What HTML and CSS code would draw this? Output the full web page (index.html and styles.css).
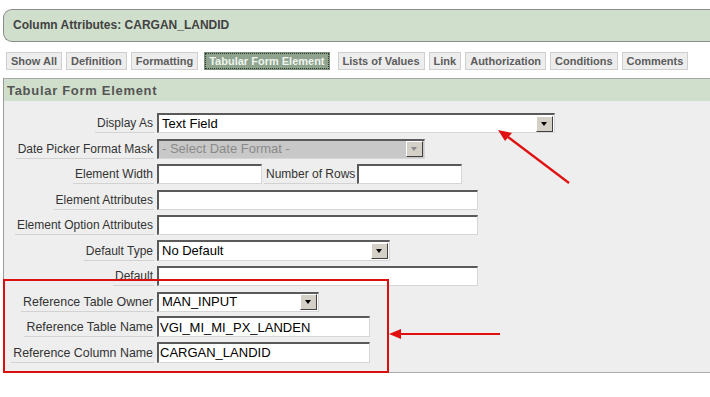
FILE: index.html
```html
<!DOCTYPE html>
<html lang="en">

<head>
    <meta charset="UTF-8">
    <meta name="viewport" content="width=device-width, initial-scale=1.0">
    <title>Column Attributes: CARGAN_LANDID</title>
    <link rel="stylesheet" href="styles.css">
</head>

<body>
    <div id="page">
        <div class="titlebar">Column Attributes: CARGAN_LANDID</div>

        <ul class="tabs">
            <li><a href="javascript:;">Show All</a></li>
            <li><a href="javascript:;">Definition</a></li>
            <li><a href="javascript:;">Formatting</a></li>
            <li class="current"><a href="javascript:;">Tabular Form Element</a></li>
            <li><a href="javascript:;">Lists of Values</a></li>
            <li><a href="javascript:;">Link</a></li>
            <li><a href="javascript:;">Authorization</a></li>
            <li><a href="javascript:;">Conditions</a></li>
            <li><a href="javascript:;">Comments</a></li>
        </ul>

        <div class="region">
            <div class="regionHead">Tabular Form Element</div>
            <div class="regionBody">
                <div class="row">
                    <div class="lbl"><span>Display As</span></div>
                    <div class="select wDisplay">
                        <span class="val">Text Field</span>
                        <span class="arrowBtn"></span>
                    </div>
                </div>
                <div class="row">
                    <div class="lbl"><span>Date Picker Format Mask</span></div>
                    <div class="select wDate disabled">
                        <span class="val">- Select Date Format -</span>
                        <span class="arrowBtn"></span>
                    </div>
                </div>
                <div class="row">
                    <div class="lbl"><span>Element Width</span></div>
                    <input type="text" class="text wSmall">
                    <span class="inlineLbl">Number of Rows</span>
                    <input type="text" class="text wSmall">
                </div>
                <div class="row">
                    <div class="lbl"><span>Element Attributes</span></div>
                    <input type="text" class="text wWide">
                </div>
                <div class="row">
                    <div class="lbl"><span>Element Option Attributes</span></div>
                    <input type="text" class="text wWide">
                </div>
                <div class="row">
                    <div class="lbl"><span>Default Type</span></div>
                    <div class="select wType">
                        <span class="val">No Default</span>
                        <span class="arrowBtn"></span>
                    </div>
                </div>
                <div class="row">
                    <div class="lbl"><span>Default</span></div>
                    <input type="text" class="text wWide">
                </div>
                <div class="row ref">
                    <div class="lbl"><span>Reference Table Owner</span></div>
                    <div class="select wOwner">
                        <span class="val">MAN_INPUT</span>
                        <span class="arrowBtn"></span>
                    </div>
                </div>
                <div class="row ref">
                    <div class="lbl"><span>Reference Table Name</span></div>
                    <input type="text" class="text wRef" value="VGI_MI_MI_PX_LANDEN">
                </div>
                <div class="row ref">
                    <div class="lbl"><span>Reference Column Name</span></div>
                    <input type="text" class="text wRef" value="CARGAN_LANDID">
                </div>
            </div>
        </div>

        <!-- annotations drawn over the screenshot -->
        <div class="markBox"></div>
        <svg class="marks" width="710" height="397" viewBox="0 0 710 397">
            <line x1="569" y1="183" x2="508" y2="137" stroke="#e01010" stroke-width="2.2"/>
            <polygon points="498,130 512,133 505,141" fill="#e01010"/>
            <line x1="500" y1="334" x2="400" y2="334" stroke="#e01010" stroke-width="2.2"/>
            <polygon points="389,334 401,329 401,339" fill="#e01010"/>
        </svg>
    </div>
</body>

</html>
```

FILE: styles.css
```css
body {
    margin: 0;
    background: #ffffff;
    font-family: "Liberation Sans", Arial, sans-serif;
    color: #333333;
}

ul {
    margin: 0;
    padding: 0;
    list-style: none;
}

a {
    text-decoration: none;
}

#page {
    position: relative;
    width: 710px;
    height: 397px;
    overflow: hidden;
}

.titlebar {
    box-sizing: border-box;
    height: 33px;
    margin: 9px 0 0 3px;
    padding-left: 9px;
    border: 1px solid #8c8c8c;
    border-right: 0;
    border-radius: 9px 0 0 9px;
    background: #cfdfcc;
    font-size: 12px;
    font-weight: bold;
    line-height: 31px;
    color: #424242;
}

.tabs {
    display: flex;
    gap: 4px;
    margin: 10px 0 0 6px;
}

.tabs li a {
    display: block;
    box-sizing: border-box;
    height: 18px;
    padding: 0 4px;
    border: 1px solid #cfcfcf;
    background: #ededed;
    font-size: 11px;
    font-weight: bold;
    line-height: 16px;
    color: #5c5c5c;
}

.tabs li.current {
    margin: 0 4px 0 2px;
}

.tabs li.current a {
    background: #8fa38f;
    border-color: #7c8f7c;
    color: #eef5ee;
    outline: 1px dotted #2a3a2a;
    outline-offset: -2px;
}

.region {
    margin: 8px 0 0 3px;
    border-left: 1px solid #9a9a9a;
}

.regionHead {
    height: 22px;
    padding-left: 3px;
    border-top: 1px solid #a8a8a8;
    background: #cfdfcc;
    font-size: 13px;
    font-weight: bold;
    letter-spacing: 0.7px;
    line-height: 23px;
    color: #555555;
}

.regionBody {
    display: flex;
    flex-direction: column;
    gap: 5.5px;
    padding: 12px 0 9px 0;
    border-bottom: 1px solid #ababab;
    background: #eeeeee;
}

.row {
    display: flex;
    align-items: flex-end;
    height: 20px;
}

.lbl {
    width: 150px;
    margin-right: 3px;
    text-align: right;
    flex-shrink: 0;
}

.lbl span,
.inlineLbl {
    display: inline-block;
    padding: 0 1px 1px 2px;
    border-bottom: 1px solid #d2d2d2;
    font-size: 12px;
    line-height: 16px;
    color: #333333;
}

.row.ref .lbl span {
    font-size: 12.4px;
}

.inlineLbl {
    margin: 0 1px 0 2px;
}

.text,
.select {
    box-sizing: border-box;
    height: 20px;
    margin: 0;
    border-style: solid;
    border-width: 2px 1px 1px 2px;
    border-color: #5a5a5a #d6d6d6 #d6d6d6 #5a5a5a;
    background: #ffffff;
    font-family: "Liberation Sans", Arial, sans-serif;
    font-size: 13px;
    color: #000000;
    outline: none;
}

.text {
    padding: 0 1px;
}

.select {
    display: flex;
    align-items: center;
}

.select .val {
    flex: 1;
    padding-left: 3px;
    line-height: 16px;
    white-space: nowrap;
}

.arrowBtn {
    position: relative;
    box-sizing: border-box;
    width: 17px;
    height: 16px;
    margin-right: 1px;
    border: 1px solid;
    border-color: #ffffff #404040 #404040 #ffffff;
    background: #d4d0c8;
}

.arrowBtn:after {
    content: "";
    position: absolute;
    left: 4px;
    top: 5px;
    border-left: 3.5px solid transparent;
    border-right: 3.5px solid transparent;
    border-top: 4px solid #000000;
}

.select.disabled {
    background: #c8c8c8;
}

.select.disabled .val {
    color: #8a8a8a;
}

.select.disabled .arrowBtn:after {
    border-top-color: #8a8a8a;
}

.wDisplay {
    width: 398px;
}

.wDate {
    width: 268px;
}

.wSmall {
    width: 105px;
}

.wWide {
    width: 321px;
}

.wType {
    width: 233px;
    height: 21px;
}

.wOwner {
    width: 162px;
}

.wRef {
    width: 213px;
    height: 21px;
}

.markBox {
    position: absolute;
    left: 3px;
    top: 279px;
    width: 382px;
    height: 90px;
    border: 2px solid #d81010;
}

.marks {
    position: absolute;
    left: 0;
    top: 0;
}
```
